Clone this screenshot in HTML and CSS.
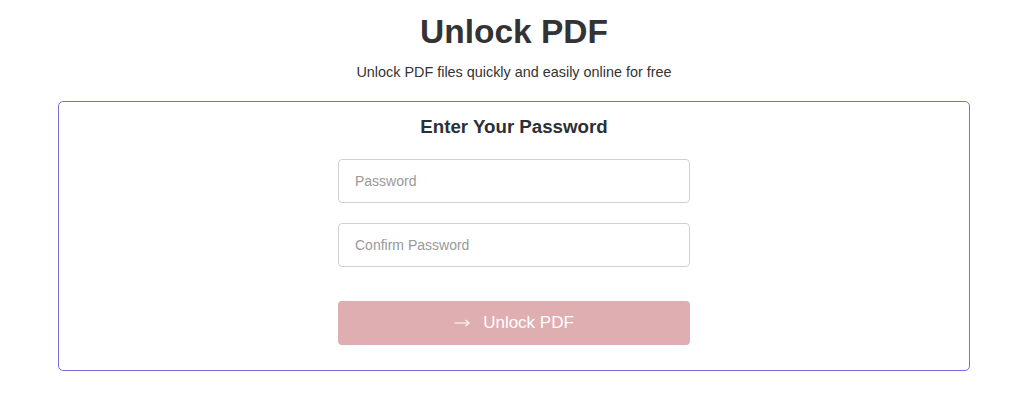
FILE: index.html
```html
<!DOCTYPE html>
<html>
<head>
<meta charset="utf-8">
<link rel="stylesheet" href="styles.css">
</head>
<body>
<div class="page">
  <header class="hero">
    <h1 class="title">Unlock PDF</h1>
    <p class="subtitle">Unlock PDF files quickly and easily online for free</p>
  </header>
  <section class="card">
    <h2 class="card-title">Enter Your Password</h2>
    <form class="form">
      <input class="field" type="password" placeholder="Password">
      <input class="field" type="password" placeholder="Confirm Password">
      <button class="btn" type="button"><svg class="arrow" width="16" height="8" viewBox="0 0 16 8"><path d="M0.5 4H15M11.5 0.8L15 4L11.5 7.2" fill="none" stroke="#fff" stroke-width="1.1"/></svg><span>Unlock PDF</span></button>
    </form>
  </section>
</div>
</body>
</html>
```
FILE: styles.css
```css
* { box-sizing: border-box; }
body {
  margin: 0;
  background: #fff;
  font-family: "Liberation Sans", Arial, sans-serif;
  color: #333;
}
.page {
  padding: 0 52px 0 58px;
}
.hero {
  text-align: center;
  padding-top: 12px;
}
.title {
  margin: 0;
  font-size: 33.5px;
  line-height: 40px;
  font-weight: bold;
  color: #333;
}
.subtitle {
  margin: 11px 0 0;
  font-size: 14.4px;
  line-height: 18px;
  color: #333;
}
.card {
  margin-top: 20px;
  border: 1px solid #7f6bd6;
  border-radius: 5px;
  padding: 13px 0 25px;
  display: flex;
  flex-direction: column;
  align-items: center;
}
.card-title {
  margin: 0;
  font-size: 18.7px;
  line-height: 24px;
  font-weight: bold;
  color: #2b2f36;
}
.form {
  width: 352px;
  margin-top: 20px;
  display: flex;
  flex-direction: column;
}
.field {
  height: 44px;
  border: 1px solid #d0d0d0;
  border-radius: 4px;
  padding: 0 16px;
  font-family: inherit;
  font-size: 14px;
  color: #333;
  outline: none;
}
.field + .field { margin-top: 20px; }
.field::placeholder { color: #999; }
.btn {
  margin-top: 34px;
  height: 44px;
  border: none;
  border-radius: 4px;
  background: #dfaeb0;
  color: #fff;
  font-family: inherit;
  font-size: 17px;
  display: flex;
  align-items: center;
  justify-content: center;
  gap: 13px;
}
.arrow { display: block; }
```
